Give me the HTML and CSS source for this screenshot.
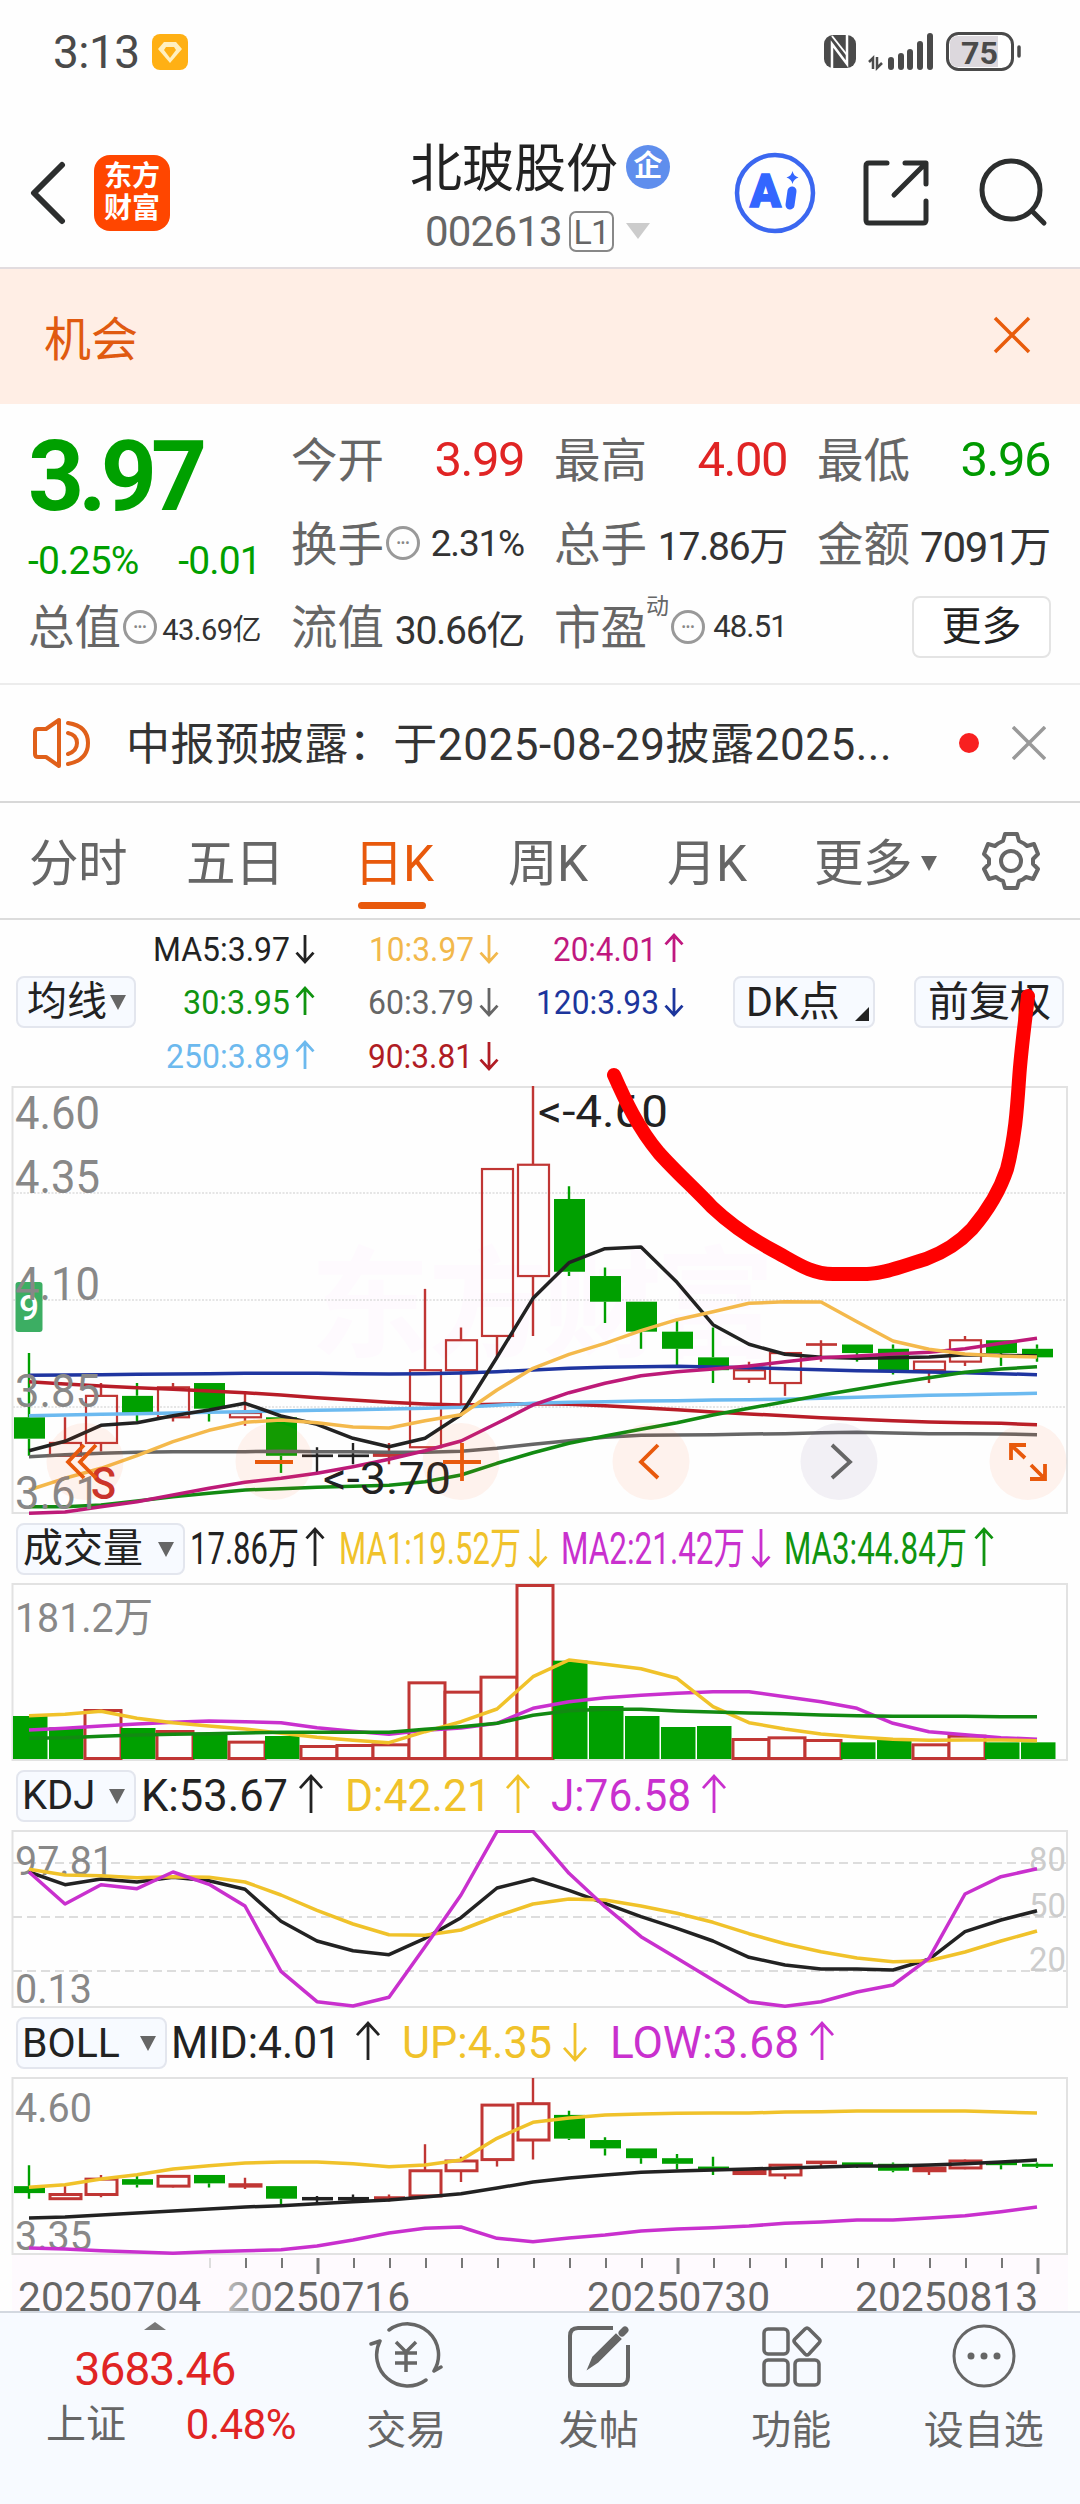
FILE: index.html
```html
<!DOCTYPE html>
<html lang="zh-CN">
<head>
    <meta charset="UTF-8">
    <meta name="viewport" content="width=device-width, initial-scale=1.0">
    <title>北玻股份 002613</title>
    <link rel="stylesheet" href="styles.css">
</head>
<body>
    <div class="status-bar">
        <span class="clock">3:13</span>
        <svg class="status-app" width="36" height="36" viewBox="0 0 36 36">
            <rect width="36" height="36" rx="8" fill="#ffb014"/>
            <path d="M12 8h12l6 7-12 14L6 15z" fill="#fff0c0"/>
            <path d="M14 13h8l2 3-6 8-6-8z" fill="#ffb014"/>
        </svg>
        <svg class="status-icons" width="200" height="40" viewBox="822 32 200 40">
            <rect x="824" y="35" width="32" height="33" rx="9" fill="#4a4a4a"/>
            <path d="M832 68V44l15 20V35" fill="none" stroke="#fff" stroke-width="2.500"/>
            <path d="M832 36l15 19" stroke="#fff" stroke-width="2"/>
            <path d="M869 62l4-4v11M877 57v11l5-5" fill="none" stroke="#4a4a4a" stroke-width="2.500"/>
            <path d="M891 60v7M901 56v11M910 52v15M920 44v23M930 36v31" stroke="#4a4a4a" stroke-width="6" stroke-linecap="round"/>
            <rect x="947.500" y="33.500" width="65" height="36" rx="11" fill="#fff" stroke="#4a4a4a" stroke-width="3"/>
            <path d="M998 36v31h-40q-8 0-8-8V44q0-8 8-8z" fill="#dcd8dd"/>
            <path d="M1019 47v9" stroke="#4a4a4a" stroke-width="3.500" stroke-linecap="round"/>
            <text x="961" y="64" class="battery-text" textLength="37" lengthAdjust="spacingAndGlyphs">75</text>
        </svg>
    </div>

    <div class="header">
        <svg class="back" width="40" height="64" viewBox="0 0 40 64"><path d="M34 4L6 32l28 28" fill="none" stroke="#2c2e2e" stroke-width="6" stroke-linecap="round" stroke-linejoin="round"/></svg>
        <div class="logo">东方<br>财富</div>
        <div class="stock">
            <div class="stock-name">北玻股份<span class="badge">企</span></div>
            <div class="stock-code">002613<span class="level">L1</span><i class="arrow-down light"></i></div>
        </div>
        <svg class="header-icons" width="320" height="90" viewBox="730 148 320 90">
            <circle cx="775" cy="193" r="38" fill="none" stroke="#3b67f0" stroke-width="4.500"/>
            <text x="750" y="207" class="ai-text" textLength="31" lengthAdjust="spacingAndGlyphs">A</text>
            <path d="M792 191l-2 14" stroke="#3366ff" stroke-width="9" stroke-linecap="round"/>
            <path d="M792.500 171q1 5 6 6.500q-5 1.500-6 6.500q-1-5-6-6.500q5-1.500 6-6.500z" fill="#3366ff"/>
            <path d="M887 163h-18q-3 0-3 3v54q0 3 3 3h54q3 0 3-3v-19M905 163h21v21M925 164l-31 31" fill="none" stroke="#2c2e2e" stroke-width="5" stroke-linecap="round" stroke-linejoin="round"/>
            <circle cx="1011" cy="190" r="29" fill="none" stroke="#2c2e2e" stroke-width="5"/>
            <path d="M1032 211l12 12" stroke="#2c2e2e" stroke-width="5" stroke-linecap="round"/>
        </svg>
    </div>

    <div class="notice">
        <span>机会</span>
        <svg width="38" height="38" viewBox="0 0 38 38"><path d="M2 2l34 34M36 2L2 36" stroke="#e85c0c" stroke-width="3.500"/></svg>
    </div>

    <div class="quote">
        <div class="price">
            <div class="last">3.97</div>
            <div class="change"><span>-0.25%</span><span>-0.01</span></div>
        </div>
        <div class="cell"><label>今开</label><b class="big red">3.99</b></div>
        <div class="cell"><label>最高</label><b class="big red">4.00</b></div>
        <div class="cell"><label>最低</label><b class="big green">3.96</b></div>
        <div class="cell"><label>换手</label><i class="more-dot">•••</i><b class="s37">2.31%</b></div>
        <div class="cell"><label>总手</label><b class="s39">17.86万</b></div>
        <div class="cell"><label>金额</label><b class="s42">7091万</b></div>
        <div class="cell"><label>总值</label><i class="more-dot">•••</i><b class="s28">43.69亿</b></div>
        <div class="cell"><label>流值</label><b class="s39">30.66亿</b></div>
        <div class="cell"><label>市盈<sup>动</sup></label><i class="more-dot pe">•••</i><b class="s30">48.51</b></div>
        <div class="cell"><button class="more-btn">更多</button></div>
    </div>

    <div class="news">
        <svg width="60" height="52" viewBox="32 716 60 52" fill="none" stroke="#e0601a" stroke-width="4" stroke-linejoin="round" stroke-linecap="round">
            <path d="M59 719v46l-13-9h-8q-3 0-3-3v-22q0-3 3-3h8zM68 722q20 3 20 20t-20 21M68 732q9 2 9 10t-9 11"/>
        </svg>
        <span class="news-text">中报预披露：于2025-08-29披露2025...</span>
        <i class="dot"></i>
        <svg width="34" height="34" viewBox="0 0 34 34"><path d="M1 1l32 32M33 1L1 33" stroke="#999" stroke-width="3.500"/></svg>
    </div>

    <div class="tabs">
        <span class="tab">分时</span>
        <span class="tab">五日</span>
        <span class="tab active">日K</span>
        <span class="tab">周K</span>
        <span class="tab">月K</span>
        <span class="tab">更多<i class="arrow-down small"></i></span>
        <svg class="gear" width="60" height="60" viewBox="-30 -30 60 60" fill="none" stroke="#666" stroke-width="4" stroke-linejoin="round">
            <path d="M-6-27H6L8-20Q13-18 16-15L23-17L27-7L22-2V3L27 8L22 18L15 16Q12 19 8 20L6 27H-6L-8 20Q-12 19-15 16L-22 18L-27 8L-22 3V-2L-27-7L-23-17L-16-15Q-13-18-8-20Z"/>
            <circle r="10"/>
        </svg>
    </div>

    <div class="ma-bar">
        <button class="pill ma-btn">均线<i class="arrow-down small"></i></button>
        <svg id="ma-legend" class="legend" width="564" height="166" viewBox="136 920 564 166"></svg>
        <button class="pill dk-btn">DK点<i class="corner"></i></button>
        <button class="pill fq-btn">前复权</button>
    </div>

    <svg id="kline" class="chart" width="1080" height="434" viewBox="0 1086 1080 434"></svg>

    <div class="ind-bar vol-bar">
        <button class="pill">成交量<i class="arrow-down small"></i></button>
        <svg id="vol-legend" class="legend" width="890" height="60" viewBox="190 1518 890 60"></svg>
    </div>
    <svg id="volume" class="chart" width="1080" height="180" viewBox="0 1583 1080 180"></svg>

    <div class="ind-bar kdj-bar">
        <button class="pill">KDJ<i class="arrow-down small"></i></button>
        <svg id="kdj-legend" class="legend" width="940" height="60" viewBox="140 1765 940 60"></svg>
    </div>
    <svg id="kdj" class="chart" width="1080" height="180" viewBox="0 1830 1080 180"></svg>

    <div class="ind-bar boll-bar">
        <button class="pill">BOLL<i class="arrow-down small"></i></button>
        <svg id="boll-legend" class="legend" width="910" height="60" viewBox="170 2012 910 60"></svg>
    </div>
    <svg id="boll" class="chart" width="1080" height="234" viewBox="0 2077 1080 234"></svg>

    <div class="bottom-bar">
        <div class="index">
            <i class="arrow-up"></i>
            <div class="index-value">3683.46</div>
            <div class="index-row"><span>上证</span><span class="red">0.48%</span></div>
        </div>
        <div class="nav-item">
            <svg width="76" height="68" viewBox="-38 -34 76 68" fill="none" stroke="#666" stroke-width="3.500" stroke-linecap="round" stroke-linejoin="round">
                <path d="M-17-26A31 31 0 0 1 28 15L35 11M20 24A31 31 0 0 1-26-15L-35-12"/>
                <path d="M-10-14L0-4L10-14M0-4V16M-11-3H11M-11 7H11" stroke-linecap="butt"/>
            </svg>
            <span>交易</span>
        </div>
        <div class="nav-item">
            <svg width="76" height="68" viewBox="-38 -34 76 68" fill="none" stroke="#666" stroke-width="4">
                <path d="M14-28H-21Q-29-28-29-20V21Q-29 29-21 29H21Q29 29 29 21V-11"/>
                <path d="M-8 9L-5 2L17-20L20-17L-2 5Z" fill="#666"/>
                <path d="M23-23L26-26" stroke-width="7" stroke-linecap="round"/>
            </svg>
            <span>发帖</span>
        </div>
        <div class="nav-item">
            <svg width="76" height="68" viewBox="-38 -34 76 68" fill="none" stroke="#666" stroke-width="3.500">
                <rect x="-27" y="-27" width="24" height="25" rx="4"/>
                <rect x="-27" y="4" width="24" height="25" rx="4"/>
                <rect x="4" y="4" width="24" height="25" rx="4"/>
                <path d="M14-27Q16-29 18-27L28-17Q30-15 28-13L18-2Q16 0 14-2L4-13Q2-15 4-17Z"/>
            </svg>
            <span>功能</span>
        </div>
        <div class="nav-item">
            <svg width="76" height="68" viewBox="-38 -34 76 68" fill="none" stroke="#666" stroke-width="3">
                <circle r="30"/>
                <g fill="#666" stroke="none"><circle cx="-13" r="3.500"/><circle r="3.500"/><circle cx="13" r="3.500"/></g>
            </svg>
            <span>设自选</span>
        </div>
    </div>

    <!-- hand drawn mark over the chart -->
    <svg class="mark" width="450" height="320" viewBox="600 980 450 320">
        <path d="M614 1075C625 1100 638 1128 659 1153C675 1171 694 1188 712 1207C732 1226 755 1241 778 1253C798 1264 812 1274 833 1274H867C887 1273 905 1265 926 1259C942 1253 958 1244 972 1229C990 1208 1001 1187 1007 1169C1015 1138 1017 1110 1019 1080C1021 1050 1025 1022 1028 996" fill="none" stroke="#f00" stroke-width="14" stroke-linecap="round" stroke-linejoin="round"/>
    </svg>

    <script src="chart.js"></script>
</body>
</html>
```
FILE: styles.css
```css
* {
    box-sizing: border-box;
}

body {
    margin: 0;
    width: 1080px;
    height: 2504px;
    position: relative;
    overflow: hidden;
    background: #fefefe;
    color: #222;
    font-family: Roboto, "Noto Sans CJK SC", sans-serif;
}

svg {
    display: block;
    flex: none;
}

i, b {
    font-style: normal;
    font-weight: normal;
}

button {
    font-family: inherit;
    color: #222;
    padding: 0;
}

.red { color: #e02424; }
.green { color: #009900; }

/* status bar */
.status-bar {
    height: 104px;
    padding-left: 53px;
    display: flex;
    align-items: center;
    color: #4a4a4a;
}

.clock {
    width: 99px;
    font-size: 46px;
    letter-spacing: -0.5px;
}

.status-icons {
    margin-left: 634px;
}

.battery-text {
    font-size: 32px;
    font-weight: bold;
    fill: #4a4a4a;
}

.ai-text {
    font-size: 46px;
    font-weight: 900;
    fill: #3366ff;
    stroke: #3366ff;
    stroke-width: 1.5px;
}

/* header */
.header {
    height: 165px;
    display: flex;
    border-bottom: 2px solid #e2dcdf;
}

.back {
    margin: 57px 0 0 28px;
}

.logo {
    width: 76px;
    height: 76px;
    margin: 51px 0 0 26px;
    padding-top: 6px;
    border-radius: 16px;
    background: #ff4600;
    color: #fff;
    font-size: 28px;
    font-weight: bold;
    line-height: 32px;
    text-align: center;
}

.stock {
    width: 260px;
    margin-left: 240px;
    padding-top: 22px;
}

.stock-name {
    display: flex;
    align-items: center;
    height: 76px;
    margin-right: -10px;
    font-size: 52px;
    white-space: nowrap;
}

.badge {
    width: 44px;
    height: 44px;
    margin: 5px 0 0 8px;
    border-radius: 50%;
    background: #5f8eed;
    color: #fff;
    font-size: 29px;
    font-weight: bold;
    line-height: 42px;
    text-align: center;
}

.stock-code {
    display: flex;
    align-items: center;
    height: 58px;
    padding-left: 15px;
    font-size: 42px;
    letter-spacing: -0.8px;
    color: #666;
}

.level {
    width: 45px;
    height: 41px;
    margin-left: 7px;
    border: 2px solid #888;
    border-radius: 7px;
    font-size: 34px;
    line-height: 38px;
    text-align: center;
}

.arrow-down {
    display: inline-block;
    border: 8px solid transparent;
    border-top: 15px solid #666;
    border-bottom: 0;
}

.arrow-down.light {
    margin-left: 12px;
    border-width: 16px 12px 0;
    border-top-color: #ccc;
}

.header-icons {
    margin: 44px 0 0 60px;
}

/* notice */
.notice {
    height: 135px;
    padding: 0 49px 3px 44px;
    display: flex;
    align-items: center;
    justify-content: space-between;
    background: #ffeee5;
    color: #e05a10;
    font-size: 47px;
}

/* quote */
.quote {
    height: 281px;
    padding: 14px 30px 0 28px;
    display: grid;
    grid-template-columns: repeat(4, 233px);
    grid-template-rows: repeat(3, 83.500px);
    column-gap: 30px;
    border-bottom: 2px solid #ececec;
}

.price {
    grid-row: span 2;
    color: #00a000;
}

.last {
    height: 112px;
    font-size: 98px;
    font-weight: bold;
    line-height: 118px;
    letter-spacing: -6px;
}

.change {
    display: flex;
    justify-content: space-between;
    font-size: 39px;
    line-height: 62px;
    letter-spacing: -0.800px;
}

.cell {
    display: flex;
    align-items: center;
    white-space: nowrap;
    color: #333;
}

.cell label {
    position: relative;
    top: -3px;
    font-size: 46.500px;
    color: #666;
}

.cell b {
    margin-left: auto;
    letter-spacing: -1px;
}

.cell .big { font-size: 49px; letter-spacing: -1.500px; }
.cell .s28 { font-size: 29px; letter-spacing: -0.500px; }
.cell .s30 { font-size: 31px; letter-spacing: -0.800px; }
.cell .s37 { font-size: 37px; letter-spacing: -1.200px; }
.cell .s39 { font-size: 39px; letter-spacing: -1.300px; }
.cell .s42 { font-size: 42px; letter-spacing: -1.300px; }

sup {
    position: absolute;
    left: 92px;
    top: 4px;
    font-size: 23px;
    line-height: 26px;
}

.more-dot {
    width: 34px;
    height: 34px;
    margin-left: 2px;
    border: 3px solid #999;
    border-radius: 50%;
    color: #888;
    font-size: 13px;
    line-height: 28px;
    text-align: center;
}

.more-dot.pe {
    margin-left: 24px;
}

.more-btn {
    width: 139px;
    height: 62px;
    margin-left: auto;
    border: 2px solid #e4e4e4;
    border-radius: 8px;
    background: #fff;
    font-size: 40px;
    line-height: 56px;
}

.cell .more-btn {
    margin-right: -1px;
}

/* news */
.news {
    height: 118px;
    padding: 0 34px 0 32px;
    display: flex;
    align-items: center;
    border-bottom: 2px solid #d8d8d8;
}

.news-text {
    width: 867px;
    padding: 0 0 5px 34px;
    font-size: 44px;
    letter-spacing: 0.550px;
    color: #333;
    white-space: nowrap;
}

.dot {
    width: 20px;
    height: 20px;
    margin-right: auto;
    border-radius: 50%;
    background: #f82020;
}

/* tabs */
.tabs {
    height: 117px;
    padding-left: 29px;
    display: grid;
    grid-template-columns: 157px 171px 151px 159px 147px 167px 60px;
    align-items: center;
    border-bottom: 2px solid #dcdcdc;
    color: #666;
    font-size: 49.500px;
}

.tab {
    position: relative;
    top: 3px;
    line-height: 80px;
    letter-spacing: -0.500px;
    white-space: nowrap;
}

.tab .arrow-down {
    margin: 0 0 10px 9px;
}

.tab.active {
    left: -3px;
    color: #e8590c;
}

.tab.active::after {
    content: "";
    position: absolute;
    left: 4px;
    bottom: -5px;
    width: 68px;
    height: 7px;
    border-radius: 4px;
    background: #e8590c;
}

/* indicator bars */
.pill {
    height: 52px;
    display: flex;
    align-items: center;
    border: 2px solid #e3e6ee;
    border-radius: 8px;
    background: #f7faff;
    font-size: 40px;
    line-height: 48px;
    white-space: nowrap;
}

.ma-bar {
    height: 166px;
    padding-left: 16px;
    display: flex;
}

.ma-bar .pill {
    margin-top: 56px;
}

.ma-btn {
    width: 120px;
    padding-left: 9px;
}

.ma-btn .arrow-down {
    margin-left: 3px;
}

.dk-btn {
    position: relative;
    width: 142px;
    margin-left: 33px;
    padding-left: 11px;
    font-size: 41px;
}

.corner {
    position: absolute;
    right: 4px;
    bottom: 5px;
    border-left: 14px solid transparent;
    border-bottom: 14px solid #222;
}

.fq-btn {
    width: 150px;
    margin-left: 39px;
    padding-left: 12px;
    font-size: 41px;
}

.ind-bar {
    padding-left: 16px;
    display: flex;
}

.ind-bar .pill {
    padding: 0 9px 0 5px;
    justify-content: space-between;
}

.vol-bar { height: 63px; }
.vol-bar .pill { width: 169px; margin: 3px 5px 0 0; }
.vol-bar .legend { margin-top: -2px; }
.kdj-bar { height: 67px; }
.kdj-bar .pill { width: 120px; margin: 7px 4px 0 0; padding-left: 4px; }
.kdj-bar .legend { margin-top: 2px; }
.boll-bar { height: 67px; }
.boll-bar .pill { width: 151px; margin: 7px 3px 0 0; padding-left: 4px; font-size: 41px; }
.boll-bar .legend { margin-top: 2px; }

/* charts */
.chart, .legend {
    font-family: Roboto, "Noto Sans CJK SC", sans-serif;
}

.legend .arrow {
    fill: none;
    stroke-width: 2.800px;
}

.watermark {
    font-family: "Noto Sans CJK SC", sans-serif;
    font-size: 120px;
    font-weight: bold;
    fill: #fefafe;
}

/* bottom bar */
.bottom-bar {
    height: 193px;
    display: flex;
    border-top: 2px solid #d3d8e0;
    background: #f7faff;
    color: #666;
    font-size: 40px;
}

.index {
    width: 310px;
    text-align: center;
}

.arrow-up {
    display: block;
    width: 0;
    margin: 9px 0 0 144px;
    border: 11px solid transparent;
    border-top: 0;
    border-bottom: 8px solid #777;
}

.index-value {
    height: 62px;
    margin-top: 11px;
    font-size: 46px;
    line-height: 56px;
    letter-spacing: -0.900px;
    color: #e02424;
}

.index-row {
    display: flex;
    justify-content: space-between;
    padding: 0 14px 0 46px;
    line-height: 44px;
}

.index-row .red {
    font-size: 42px;
    letter-spacing: -0.500px;
}

.nav-item {
    width: 192.500px;
    padding-top: 9px;
    display: flex;
    flex-direction: column;
    align-items: center;
}

.nav-item span {
    margin-top: 12px;
    line-height: 58px;
}

.mark {
    position: absolute;
    left: 600px;
    top: 980px;
}
```
FILE: chart.js
```js
const RED = '#c03634', GREEN = '#00a000', BLACK = '#222', YELLOW = '#f0c22a', PURPLE = '#c930ce';

// high, body top, body bottom, low, colour
const candles = [
    [3.98, 3.83, 3.78, 3.74, 'g'], [3.83, 3.77, 3.74, 3.74, 'r'], [3.91, 3.88, 3.77, 3.75, 'r'],
    [3.91, 3.88, 3.84, 3.82, 'g'], [3.91, 3.90, 3.83, 3.82, 'r'], [3.91, 3.91, 3.85, 3.82, 'g'],
    [3.89, 3.84, 3.83, 3.81, 'r'], [3.83, 3.83, 3.74, 3.70, 'g'], [3.76, 3.74, 3.74, 3.70, 'b'],
    [3.77, 3.74, 3.74, 3.72, 'b'], [3.77, 3.745, 3.74, 3.72, 'r'], [4.13, 3.94, 3.76, 3.76, 'r'],
    [4.04, 4.01, 3.94, 3.86, 'r'], [4.41, 4.41, 4.02, 3.97, 'r'], [4.604, 4.42, 4.16, 4.02, 'r'],
    [4.37, 4.34, 4.17, 4.16, 'g'], [4.18, 4.16, 4.10, 4.05, 'g'], [4.10, 4.10, 4.03, 3.99, 'g'],
    [4.06, 4.03, 3.99, 3.95, 'g'], [4.04, 3.97, 3.94, 3.91, 'g'], [3.96, 3.94, 3.92, 3.91, 'r'],
    [3.98, 3.98, 3.91, 3.88, 'r'], [4.01, 4.00, 4.00, 3.96, 'r'], [4.00, 4.00, 3.98, 3.96, 'g'],
    [4.00, 3.99, 3.94, 3.93, 'g'], [3.96, 3.96, 3.94, 3.91, 'r'], [4.02, 4.01, 3.96, 3.95, 'r'],
    [4.01, 4.01, 3.98, 3.95, 'g'], [4.00, 3.99, 3.97, 3.96, 'g']
];
const colors = { r: RED, g: GREEN, b: BLACK };
const xOf = i => 29 + i * 36;

function el(parent, name, attrs, text) {
    const node = document.createElementNS('http://www.w3.org/2000/svg', name);
    for (const key in attrs) node.setAttribute(key, attrs[key]);
    if (text !== undefined) node.textContent = text;
    parent.appendChild(node);
    return node;
}

// text between x1 and x2, y is the baseline
function label(svg, text, x1, x2, y, size, fill, weight) {
    el(svg, 'text', {
        x: x1 - 2, y: y, 'font-size': size, fill: fill, 'font-weight': weight || 400,
        textLength: x2 - x1 + 4, lengthAdjust: 'spacingAndGlyphs'
    }, text);
}

function arrow(svg, up, x, top, bottom, w, color) {
    const tip = up ? top : bottom;
    const back = up ? tip + w * 0.55 : tip - w * 0.55;
    el(svg, 'path', {
        class: 'arrow', stroke: color,
        d: `M${x} ${top}V${bottom}M${x - w / 2} ${back}L${x} ${tip}L${x + w / 2} ${back}`
    });
}

function frame(svg, top, bottom) {
    el(svg, 'rect', { x: 12.5, y: top, width: 1054.5, height: bottom - top, fill: 'none', stroke: '#e2e2e2', 'stroke-width': 2 });
}

// values are in thirds of a pixel below the origin
function line(svg, values, origin, color) {
    const points = values.map((v, i) => xOf(i) + ',' + (origin + v / 3).toFixed(1)).join(' ');
    el(svg, 'polyline', { points: points, fill: 'none', stroke: color, 'stroke-width': 3.5, 'stroke-linejoin': 'round' });
}

function drawCandles(svg, top, scale, stroke) {
    const y = p => top + (4.604 - p) * scale;
    candles.forEach(([high, open, close, low, type], i) => {
        const x = xOf(i), c = colors[type];
        el(svg, 'path', { d: `M${x} ${y(high)}V${y(open)}M${x} ${y(close)}V${y(low)}`, stroke: c, 'stroke-width': 2.4 });
        const h = y(close) - y(open);
        if (type === 'g') {
            el(svg, 'rect', { x: x - 15, y: y(open), width: 31, height: Math.max(h, 3), fill: c });
        } else if (h < 1) {
            el(svg, 'path', { d: `M${x - 15} ${y(open)}H${x + 16}`, stroke: c, 'stroke-width': stroke + 0.5 });
        } else {
            el(svg, 'rect', { x: x - 15, y: y(open), width: 31, height: h, fill: 'none', stroke: c, 'stroke-width': stroke });
        }
    });
}

// moving average legend
const ma = document.getElementById('ma-legend');
[
    ['MA5:3.97', 155, 288, 305, 961, BLACK, 0], ['10:3.97', 371, 472, 489, 961, '#f2b84b', 0], ['20:4.01', 555, 655, 674, 961, '#c0187f', 1],
    ['30:3.95', 185, 288, 305, 1014, '#109410', 1], ['60:3.79', 370, 472, 489, 1014, '#666', 0], ['120:3.93', 538, 657, 674, 1014, '#1c359c', 0],
    ['250:3.89', 168, 288, 305, 1068, '#6cb9ee', 1], ['90:3.81', 370, 471, 489, 1068, '#b01c24', 0]
].forEach(([t, a, b, ax, y, c, up]) => {
    label(ma, t, a, b, y, 34, c);
    arrow(ma, up, ax, y - 26, y + 1, 17, c);
});

// k line
const k = document.getElementById('kline');
[['东', 310], ['方', 428], ['财', 542], ['富', 655]].forEach(([t, x]) => el(k, 'text', { x: x, y: 1348, class: 'watermark' }, t));
[1193, 1300, 1407].forEach(y => el(k, 'path', { d: `M13 ${y}H1067`, stroke: '#ddd', 'stroke-width': 1.5, 'stroke-dasharray': '2 1.500' }));
frame(k, 1087, 1513);
el(k, 'rect', { x: 15.5, y: 1282, width: 27, height: 50, rx: 3, fill: '#3cae63' });
label(k, '9', 21, 37, 1320, 35, '#fff', 500);
drawCandles(k, 1086, 428, 2.2);
line(k, [886,885,884,883,882,881,880,880,880,881,882,881,879,875,870,865,862,860,859,861,863,866,869,872,874,876,878,881,884], 1080, '#1f35a0');
line(k, [905,912,918,923,928,933,938,945,953,960,967,972,975,973,971,973,977,983,989,996,1002,1007,1013,1018,1022,1026,1028,1030,1034], 1080, '#b81d28');
line(k, [1007,1005,1003,1001,999,997,995,993,991,989,987,985,982,976,970,967,965,963,962,960,959,958,955,952,949,946,944,942,940], 1080, '#6cbaf0');
line(k, [1130,1124,1120,1117,1115,1115,1115,1114,1115,1115,1117,1117,1114,1105,1093,1082,1072,1066,1065,1064,1062,1061,1058,1057,1059,1061,1061,1062,1064], 1080, '#666');
line(k, [1280,1280,1275,1263,1250,1240,1230,1226,1222,1219,1216,1205,1185,1150,1118,1090,1068,1048,1028,1005,985,965,946,928,910,893,877,867,860], 1080, '#128a12');
line(k, [1112,1084,1036,1028,1007,990,970,1008,1033,1075,1100,1075,1004,832,655,548,506,501,607,734,793,823,832,835,833,831,824,826,828], 1080, BLACK);
line(k, [1300,1296,1280,1265,1245,1225,1207,1195,1180,1160,1138,1112,1083,1030,975,938,910,887,875,867,858,845,833,828,822,817,806,790,775], 1080, '#bd1a78');
line(k, [1230,1195,1165,1127,1085,1051,1027,1020,1028,1041,1044,1022,1004,930,865,823,790,752,719,695,670,665,666,725,783,808,822,828,831], 1080, '#f4b94c');
[['4.60', 1129], ['4.35', 1193], ['4.10', 1300], ['3.85', 1407], ['3.61', 1509]].forEach(([t, y]) => label(k, t, 17, 98, y, 46, '#888'));
label(k, '<-4.60', 540, 666, 1127, 45, BLACK);
label(k, '<-3.70', 325, 449, 1494, 45, BLACK);
label(k, 'S', 93, 114, 1499, 45, '#c8322c', 500);

// round chart controls
[[85, '#ff6020'], [274, '#ff6020'], [461, '#ff6020'], [651, '#ff6020'], [839, '#604080'], [1028, '#ff6020']].forEach(([x, c]) =>
    el(k, 'circle', { cx: x, cy: 1461.5, r: 38.5, fill: c, opacity: 0.075 }));
[
    ['M84 1445L68 1462L84 1478M96 1445L80 1462L96 1478', '#e8590c'],
    ['M255 1462H293', '#e8590c'], ['M443 1462H481M462 1443V1481', '#e8590c'],
    ['M658 1445L641 1462L658 1478', '#e8590c'], ['M832 1445L850 1462L832 1478', '#666'],
    ['M1026 1445H1011V1460M1011 1445L1025 1458M1031 1465L1045 1479M1030 1479H1045V1464', '#e8590c']
].forEach(([d, c]) => el(k, 'path', { d: d, fill: 'none', stroke: c, 'stroke-width': 3.8 }));

// volume
const vl = document.getElementById('vol-legend');
[['17.86万', 192, 297, 315, BLACK, 1], ['MA1:19.52万', 341, 519, 538, YELLOW, 0], ['MA2:21.42万', 563, 743, 761, PURPLE, 0], ['MA3:44.84万', 786, 965, 984, '#109410', 1]].forEach(([t, a, b, ax, c, up]) => {
    label(vl, t, a, b, 1564, 44, c);
    arrow(vl, up, ax, 1529, 1566, 17, c);
});
const v = document.getElementById('volume');
frame(v, 1584, 1760);
[618,652,600,654,663,668,695,678,708,705,703,517,545,500,225,452,588,618,651,648,687,682,690,697,690,703,677,697,697].forEach((t, i) => {
    const y = 1510 + t / 3, x = xOf(i) - 16;
    const down = candles[i][4] === 'g' || i === 1;
    if (down) {
        el(v, 'rect', { x: x, y: y, width: 34.5, height: 1759 - y, fill: GREEN });
    } else {
        el(v, 'rect', { x: x, y: y + 0.5, width: 36, height: 1758 - y, fill: '#fefefe', stroke: RED, 'stroke-width': 3 });
    }
});
label(v, '181.2万', 17, 151, 1632, 41, '#888');
line(v, [660,655,648,642,637,633,635,638,653,664,673,661,654,640,595,575,563,556,550,545,545,560,575,595,640,665,674,683,688], 1510, PURPLE);
line(v, [617,613,604,625,638,648,657,670,682,691,698,665,635,597,500,450,463,476,505,590,638,657,672,681,688,691,690,690,692], 1510, YELLOW);
line(v, [685,683,679,675,673,671,669,667,667,667,667,658,650,640,616,602,598,598,603,606,609,611,615,617,619,619,619,620,620], 1510, '#128a12');

// kdj
const kl = document.getElementById('kdj-legend');
[['K:53.67', 143, 286, 311, BLACK], ['D:42.21', 347, 489, 518, YELLOW], ['J:76.58', 553, 689, 714, PURPLE]].forEach(([t, a, b, ax, c]) => {
    label(kl, t, a, b, 1811, 44, c);
    arrow(kl, 1, ax, 1776, 1813, 22, c);
});
const kd = document.getElementById('kdj');
[1863, 1917, 1971].forEach(y => el(kd, 'path', { d: `M13 ${y}H1067`, stroke: '#ddd', 'stroke-width': 1.8, 'stroke-dasharray': '9 5' }));
frame(kd, 1831, 2007);
label(kd, '97.81', 17, 112, 1875, 41, '#888');
label(kd, '0.13', 17, 90, 2003, 41, '#888');
[['80', 1871], ['50', 1917], ['20', 1971]].forEach(([t, y]) => label(kd, t, 1031, 1064, y, 34, '#ccc'));
line(kd, [336,374,357,366,352,362,388,484,543,572,584,535,473,384,357,391,430,470,505,543,592,615,627,627,630,598,515,480,452], 1760, BLACK);
line(kd, [328,345,347,353,350,352,366,405,451,492,524,526,510,468,432,417,420,438,460,487,521,551,575,594,605,602,576,543,513], 1760, YELLOW);
line(kd, [336,432,374,386,336,373,438,634,725,738,712,560,405,214,214,340,440,530,595,660,725,739,725,696,675,595,402,350,326], 1760, PURPLE);

// boll
const bl = document.getElementById('boll-legend');
[['MID:4.01', 173, 339, 368, BLACK, 1], ['UP:4.35', 404, 550, 575, YELLOW, 0], ['LOW:3.68', 612, 797, 822, PURPLE, 1]].forEach(([t, a, b, ax, c, up]) => {
    label(bl, t, a, b, 2058, 44, c);
    arrow(bl, up, ax, 2023, 2060, 22, c);
});
const bo = document.getElementById('boll');
el(bo, 'rect', { x: 12, y: 2255, width: 1056, height: 56, fill: '#fefafe' });
frame(bo, 2078, 2254);
label(bo, '4.60', 17, 90, 2122, 41, '#888');
label(bo, '3.35', 17, 90, 2250, 41, '#888');
drawCandles(bo, 2078, 139.7, 3);
line(bo, [532,524,507,494,477,467,459,456,456,461,470,465,450,385,337,324,315,312,310,309,309,306,305,303,303,303,303,306,309], 2010, YELLOW);
line(bo, [624,621,615,609,603,597,591,587,581,575,570,561,551,534,516,504,495,487,483,480,477,474,471,468,468,465,461,456,450], 2010, BLACK);
line(bo, [714,717,722,726,730,725,722,719,708,690,669,655,651,685,695,684,675,663,657,653,648,640,636,630,630,624,617,605,591], 2010, PURPLE);
for (let i = 5; i < 29; i++) {
    const major = i % 10 === 8;
    el(bo, 'path', { d: `M${xOf(i) + 1} 2258v${major ? 16 : 10}`, stroke: i === 5 ? '#ddd' : '#777', 'stroke-width': major ? 3 : 2 });
}
const fade = el(bo, 'linearGradient', { id: 'fade' });
el(fade, 'stop', { offset: 0, 'stop-color': '#bbb' });
el(fade, 'stop', { offset: 0.3, 'stop-color': '#666' });
[['20250704', 20, 199, '#666'], ['20250716', 229, 408, 'url(#fade)'], ['20250730', 589, 768, '#666'], ['20250813', 857, 1036, '#666']].forEach(([t, a, b, c]) => label(bo, t, a, b, 2311, 40, c));
```
